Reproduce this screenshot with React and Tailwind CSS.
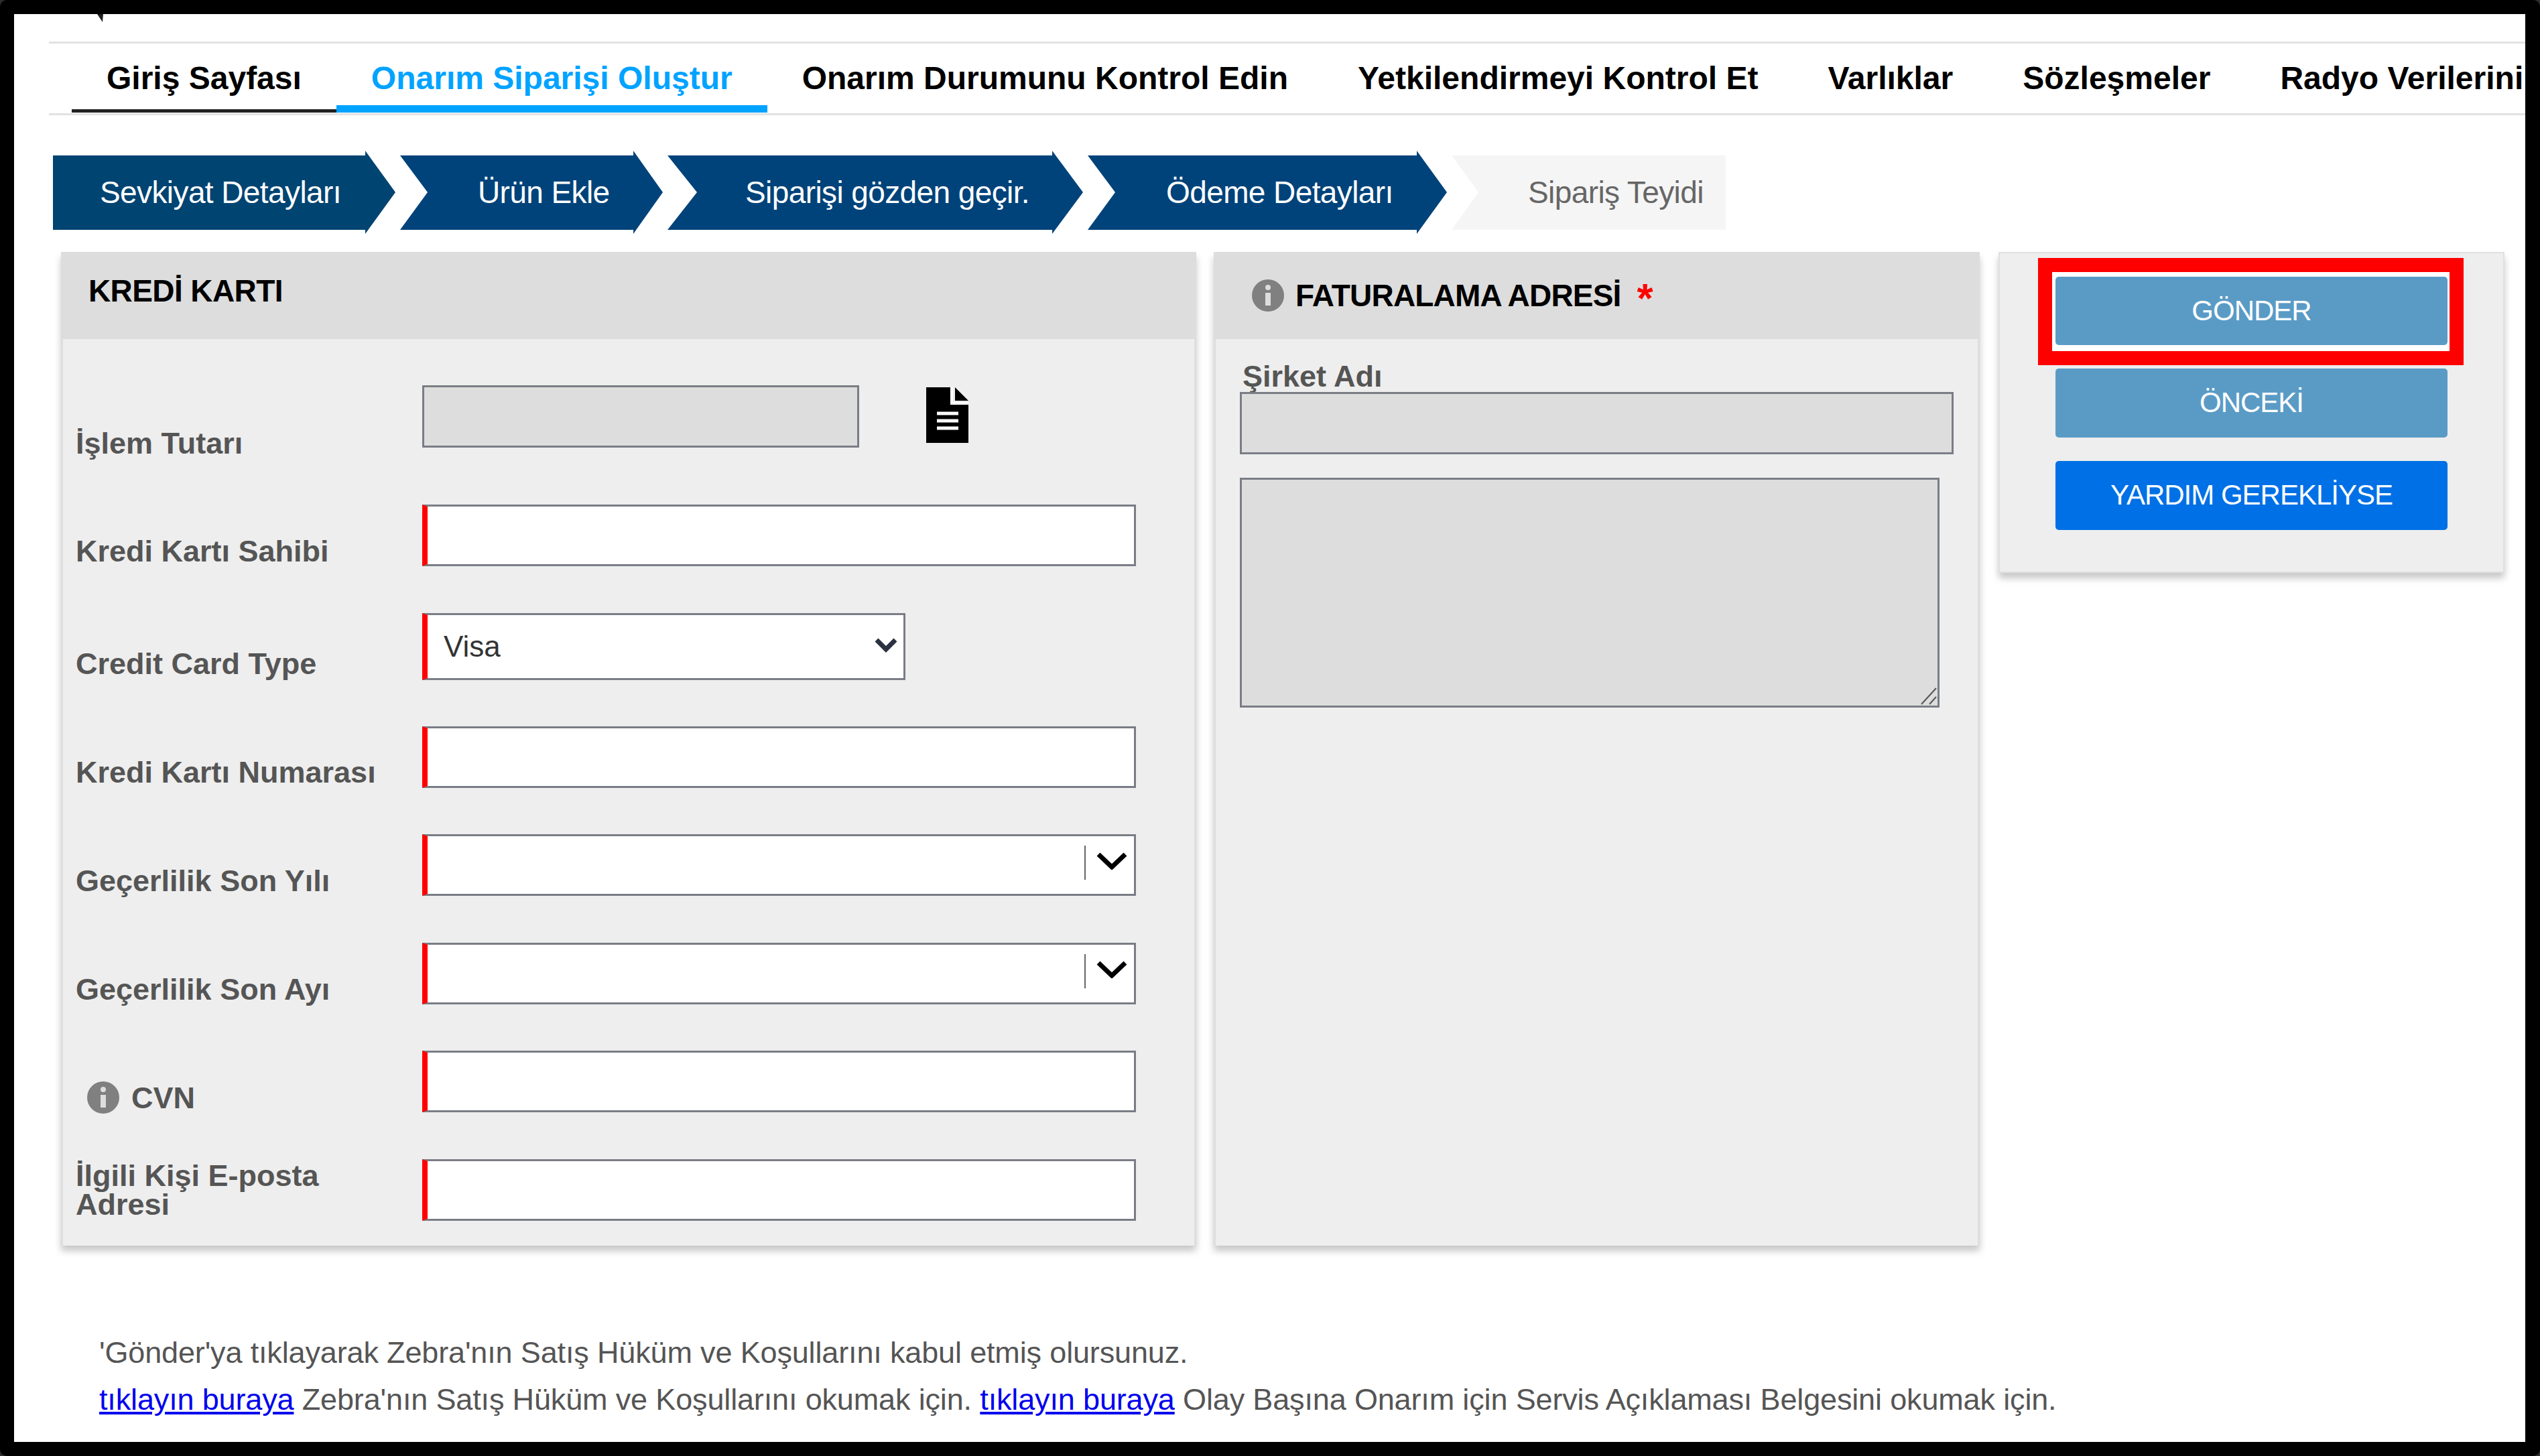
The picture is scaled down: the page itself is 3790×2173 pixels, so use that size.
import React from 'react';

const font = '[font-family:"Liberation_Sans",Arial,sans-serif]';

const tabs = [
  { label: 'Giriş Sayfası', line: 'shadow-[inset_0_-5px_0_#222222]', text: 'text-black' },
  { label: 'Onarım Siparişi Oluştur', line: 'shadow-[inset_0_-11px_0_#00a3ff]', text: 'text-[#00a3ff]' },
  { label: 'Onarım Durumunu Kontrol Edin', line: '', text: 'text-black' },
  { label: 'Yetkilendirmeyi Kontrol Et', line: '', text: 'text-black' },
  { label: 'Varlıklar', line: '', text: 'text-black' },
  { label: 'Sözleşmeler', line: '', text: 'text-black' },
  { label: 'Radyo Verilerini', line: '', text: 'text-black' },
];

const steps = [
  { label: 'Sevkiyat Detayları', w: 'w-[511px] pl-[70px] [clip-path:polygon(0_7px,466px_7px,466px_0,511px_62px,466px_124px,466px_118px,0_118px)]', c: 'bg-[#004472] text-white' },
  { label: 'Ürün Ekle', w: 'w-[392px] pl-[116px] [clip-path:polygon(0_7px,348px_7px,348px_0,392px_62px,348px_124px,348px_118px,0_118px,41px_62px)]', c: 'bg-[#00437a] text-white' },
  { label: 'Siparişi gözden geçir.', w: 'w-[620px] pl-[116px] [clip-path:polygon(0_7px,574px_7px,574px_0,620px_62px,574px_124px,574px_118px,0_118px,44px_62px)]', c: 'bg-[#00437a] text-white' },
  { label: 'Ödeme Detayları', w: 'w-[536px] pl-[117px] [clip-path:polygon(0_7px,491px_7px,491px_0,536px_62px,491px_124px,491px_118px,0_118px,41px_62px)]', c: 'bg-[#00437a] text-white' },
  { label: 'Sipariş Teyidi', w: 'w-[409px] pl-[114px] [clip-path:polygon(0_7px,409px_7px,409px_118px,0_118px,40px_62px)]', c: 'bg-[#f5f5f5] text-[#666666]' },
];

const InfoIcon = ({ className }) => (
  <svg viewBox="0 0 48 48" className={className}>
    <circle cx="24" cy="24" r="24" fill="#808080" />
    <circle cx="24" cy="12" r="4" fill="#dddddd" />
    <rect x="20" y="20" width="8" height="19" fill="#dddddd" />
  </svg>
);

const Chevron = () => (
  <>
    <div className="absolute left-[980px] top-[14px] h-[51px] w-[2px] bg-[#666666]" />
    <svg viewBox="0 0 46 26" className="absolute left-[998px] top-[24px] h-[26px] w-[46px]">
      <path d="M3 3 L23 22 L43 3" fill="none" stroke="#000000" strokeWidth="7" />
    </svg>
  </>
);

const fieldBase = 'relative border-[3px] border-[#7a7d85] box-border';
const required = 'border-l-[8px] border-l-[#ff0000] bg-white';

const Row = ({ h, labelTop, children, label }) => (
  <div className={`flex ${h}`}>
    <div className={`w-[536px] pl-[19px] text-[45px] leading-[43px] text-[#555555] font-bold ${labelTop}`}>{label}</div>
    {children}
  </div>
);

export default function App() {
  return (
    <div className={`w-[3790px] h-[2173px] bg-[#2e2e2e] overflow-hidden ${font}`}>
      <div className="w-full h-full bg-black rounded-[10px] pt-[21px] pl-[21px] pr-[22px] pb-[21px]">
        <div className="relative w-full h-full bg-white overflow-hidden whitespace-nowrap">
          <svg viewBox="0 0 10 12" className="absolute left-[124px] top-0 h-[12px] w-[10px]">
            <path d="M0 0 L9 0 L8 12 Z" fill="#222222" />
          </svg>

          <div className="ml-[52px] mt-[41px] h-[110px] border-y-[3px] border-[#e2e2e2]">
            <div className="flex pl-[34px]">
              {tabs.map((t) => (
                <div key={t.label} className={`shrink-0 h-[103px] flex items-center px-[52px] font-bold text-[48px] ${t.line} ${t.text}`}>{t.label}</div>
              ))}
            </div>
          </div>

          <div className="flex gap-[7px] ml-[58px] mt-[53px] h-[124px]">
            {steps.map((s) => (
              <div key={s.label} className={`shrink-0 h-[124px] flex items-center text-[46px] tracking-[-0.6px] ${s.w} ${s.c}`}>{s.label}</div>
            ))}
          </div>

          <div className="flex items-start mt-[27px] ml-[70px]">
            <div className="w-[1694px] h-[1483px] flex flex-col shadow-[0_8px_10px_rgba(0,0,0,0.22)]">
              <div className="h-[130px] bg-[#dddddd] pl-[41px] pt-[31px] text-[46px] leading-[54px] font-bold tracking-[-0.6px] text-black">KREDİ KARTI</div>
              <div className="flex-1 pt-[69px] bg-[#eeeeee] border-x-[3px] border-[#dedede]">
                <Row h="h-[178px]" labelTop="pt-[65px]" label="İşlem Tutarı">
                  <div className={`${fieldBase} w-[652px] h-[93px] bg-[#dddddd]`} />
                  <svg viewBox="0 0 63 83" className="ml-[100px] mt-[3px] h-[83px] w-[63px]">
                    <path d="M0 0 H36 V24 H63 V83 H0 Z" fill="#000000" />
                    <path d="M43 0 L63 20 H43 Z" fill="#000000" />
                    <path d="M38 0 V24 H63" fill="none" stroke="#ffffff" strokeWidth="4" />
                    <path d="M16 39 H48 M16 50 H48 M16 61 H48" stroke="#ffffff" strokeWidth="5" />
                  </svg>
                </Row>
                <Row h="h-[162px]" labelTop="pt-[48px]" label="Kredi Kartı Sahibi">
                  <div className={`${fieldBase} ${required} w-[1065px] h-[92px]`} />
                </Row>
                <Row h="h-[169px]" labelTop="pt-[54px]" label="Credit Card Type">
                  <div className={`${fieldBase} ${required} w-[721px] h-[100px] flex items-center pl-[24px] text-[44px] font-normal text-[#333333]`}>
                    Visa
                    <svg viewBox="0 0 34 22" className="absolute left-[667px] top-[34px] h-[22px] w-[34px]">
                      <path d="M3 3 L17 17 L31 3" fill="none" stroke="#2b3140" strokeWidth="7" />
                    </svg>
                  </div>
                </Row>
                <Row h="h-[161px]" labelTop="pt-[47px]" label="Kredi Kartı Numarası">
                  <div className={`${fieldBase} ${required} w-[1065px] h-[92px]`} />
                </Row>
                <Row h="h-[162px]" labelTop="pt-[48px]" label="Geçerlilik Son Yılı">
                  <div className={`${fieldBase} ${required} w-[1065px] h-[92px]`}><Chevron /></div>
                </Row>
                <Row h="h-[161px]" labelTop="pt-[48px]" label="Geçerlilik Son Ayı">
                  <div className={`${fieldBase} ${required} w-[1065px] h-[92px]`}><Chevron /></div>
                </Row>
                <Row
                  h="h-[162px]"
                  labelTop="pt-[46px]"
                  label={
                    <span className="flex items-center pl-[17px] gap-[18px]">
                      <InfoIcon className="h-[48px] w-[48px] shrink-0" />
                      CVN
                    </span>
                  }
                >
                  <div className={`${fieldBase} ${required} w-[1065px] h-[92px]`} />
                </Row>
                <Row h="h-[92px]" labelTop="pt-[3px]" label={<>İlgili Kişi E-posta<br />Adresi</>}>
                  <div className={`${fieldBase} ${required} w-[1065px] h-[92px]`} />
                </Row>
              </div>
            </div>

            <div className="ml-[26px] w-[1143px] h-[1483px] flex flex-col shadow-[0_8px_10px_rgba(0,0,0,0.22)]">
              <div className="h-[130px] bg-[#dddddd] flex items-center pl-[57px]">
                <InfoIcon className="h-[48px] w-[48px] shrink-0" />
                <span className="ml-[17px] text-[46px] font-bold tracking-[-0.8px] text-black">FATURALAMA ADRESİ</span>
                <span className="ml-[24px] text-[62px] leading-[54px] font-bold text-[#ff0000] relative top-[4px]">*</span>
              </div>
              <div className="flex-1 pl-[36px] bg-[#eeeeee] border-x-[3px] border-[#dedede]">
                <div className="h-[79px] pt-[31px] pl-[4px] text-[45px] leading-[50px] font-bold text-[#555555]">Şirket Adı</div>
                <div className={`${fieldBase} w-[1065px] h-[93px] bg-[#dddddd]`} />
                <div className={`${fieldBase} mt-[35px] w-[1044px] h-[343px] bg-[#dddddd]`}>
                  <svg viewBox="0 0 28 28" className="absolute right-0 bottom-0 h-[28px] w-[28px]">
                    <path d="M4 26 L26 2 M16 26 L26 15" stroke="#555555" strokeWidth="2" />
                  </svg>
                </div>
              </div>
            </div>

            <div className="ml-[28px] w-[755px] h-[479px] box-border border-2 border-[#e0e0e0] bg-[#eeeeee] shadow-[0_8px_10px_rgba(0,0,0,0.22)] pt-[7px]">
              <div className="ml-[57px] w-[635px] h-[160px] box-border border-[21px] border-[#ff0000] bg-white pt-[7px] pl-[5px]">
                <div className="w-[585px] h-[102px] rounded-[5px] bg-[#5a9bc6] text-white text-[42px] tracking-[-1px] flex items-center justify-center pb-[2px]">GÖNDER</div>
              </div>
              <div className="mt-[5px] ml-[83px] w-[585px] h-[103px] rounded-[5px] bg-[#5a9bc6] text-white text-[42px] tracking-[-1px] flex items-center justify-center pb-[2px]">ÖNCEKİ</div>
              <div className="mt-[35px] ml-[83px] w-[585px] h-[103px] rounded-[5px] bg-[#0070e6] text-white text-[42px] tracking-[-1px] flex items-center justify-center pb-[2px]">YARDIM GEREKLİYSE</div>
            </div>
          </div>

          <div className="ml-[127px] mt-[125px] text-[45px] leading-[70px] tracking-[-0.15px] text-[#555555]">
            <div>'Gönder'ya tıklayarak Zebra'nın Satış Hüküm ve Koşullarını kabul etmiş olursunuz.</div>
            <div>
              <a className="text-[#0000ee] underline">tıklayın buraya</a> Zebra'nın Satış Hüküm ve Koşullarını okumak için. <a className="text-[#0000ee] underline">tıklayın buraya</a> Olay Başına Onarım için Servis Açıklaması Belgesini okumak için.
            </div>
          </div>
        </div>
      </div>
    </div>
  );
}
